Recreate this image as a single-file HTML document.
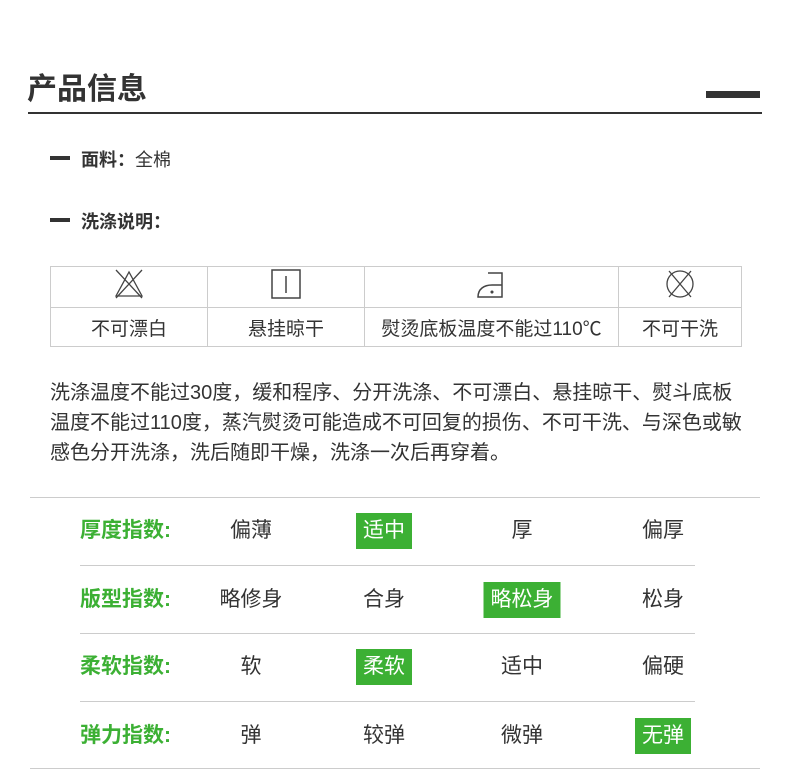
<!DOCTYPE html>
<html><head><meta charset="utf-8"><style>
*{margin:0;padding:0;box-sizing:border-box}
body{width:790px;height:769px;background:#fff;position:relative;font-family:"Liberation Sans","Noto Sans CJK SC",sans-serif;color:#333;overflow:hidden}
.a{position:absolute}
.title{left:27px;top:64px;font-size:30px;font-weight:bold;color:#333}
.dash{width:20px;height:4px;background:#333}
.bt{font-size:18px;font-weight:bold}
table.w{position:absolute;left:50px;top:266px;border-collapse:collapse}
table.w td{border:1px solid #ccc;text-align:center;font-size:19px;color:#333}
.p{left:50px;top:378px;width:740px;font-size:20px;line-height:30px;color:#333;white-space:nowrap}
.lab{font-size:21px;font-weight:bold;color:#3cb034;height:36px;line-height:36px}
.v{font-size:21px;color:#333;transform:translateX(-50%);white-space:nowrap;height:36px;line-height:36px}
.g{background:#3cb034;color:#fff;padding:0 7px}
.hl{height:1px;background:#ccc}
</style></head><body>
<div class="a title">产品信息</div>
<div class="a" style="left:706px;top:91px;width:54px;height:7px;background:#333"></div>
<div class="a" style="left:28px;top:112px;width:734px;height:2px;background:#333"></div>
<div class="a dash" style="left:50px;top:156px"></div>
<div class="a" style="left:81px;top:146px;font-size:18px"><b>面料：</b>全棉</div>
<div class="a dash" style="left:50px;top:218px"></div>
<div class="a bt" style="left:81px;top:208px">洗涤说明：</div>
<table class="w">
<tr style="height:41px">
<td style="width:157px"><svg width="34" height="34" viewBox="0 0 34 34" fill="none" stroke="#444" stroke-width="1.3"><path d="M17 5 L4 29 H30 Z"/><path d="M4 3 L30 31 M30 3 L4 31"/></svg></td>
<td style="width:157px"><svg width="32" height="32" viewBox="0 0 32 32" fill="none" stroke="#444" stroke-width="1.5"><rect x="2" y="2" width="28" height="28"/><path d="M16 8 V25"/></svg></td>
<td style="width:254px"><svg width="36" height="34" viewBox="0 0 36 34" fill="none" stroke="#444" stroke-width="1.5"><path d="M14 6 H28 V30 H4 C4 22 10 18 18 18 H28"/><circle cx="18" cy="25" r="0.8" fill="#444"/></svg></td>
<td style="width:123px"><svg width="34" height="34" viewBox="0 0 34 34" fill="none" stroke="#444" stroke-width="1.3"><circle cx="17" cy="17" r="13"/><path d="M6 4 L28 30 M28 4 L6 30"/></svg></td>
</tr>
<tr style="height:39px"><td>不可漂白</td><td>悬挂晾干</td><td>熨烫底板温度不能过110℃</td><td>不可干洗</td></tr>
</table>
<div class="a p">洗涤温度不能过30度，缓和程序、分开洗涤、不可漂白、悬挂晾干、熨斗底板<br>温度不能过110度，蒸汽熨烫可能造成不可回复的损伤、不可干洗、与深色或敏<br>感色分开洗涤，洗后随即干燥，洗涤一次后再穿着。</div>
<div class="a hl" style="left:30px;top:497px;width:730px"></div>
<div class="a hl" style="left:80px;top:565px;width:615px"></div>
<div class="a hl" style="left:80px;top:633px;width:615px"></div>
<div class="a hl" style="left:80px;top:701px;width:615px"></div>
<div class="a hl" style="left:30px;top:768px;width:730px"></div>

<div class="a lab" style="left:80px;top:513px">厚度指数:</div>
<div class="a v" style="left:251px;top:513px">偏薄</div>
<div class="a v g" style="left:384px;top:513px">适中</div>
<div class="a v" style="left:522px;top:513px">厚</div>
<div class="a v" style="left:663px;top:513px">偏厚</div>

<div class="a lab" style="left:80px;top:582px">版型指数:</div>
<div class="a v" style="left:251px;top:582px">略修身</div>
<div class="a v" style="left:384px;top:582px">合身</div>
<div class="a v g" style="left:522px;top:582px">略松身</div>
<div class="a v" style="left:663px;top:582px">松身</div>

<div class="a lab" style="left:80px;top:649px">柔软指数:</div>
<div class="a v" style="left:251px;top:649px">软</div>
<div class="a v g" style="left:384px;top:649px">柔软</div>
<div class="a v" style="left:522px;top:649px">适中</div>
<div class="a v" style="left:663px;top:649px">偏硬</div>

<div class="a lab" style="left:80px;top:718px">弹力指数:</div>
<div class="a v" style="left:251px;top:718px">弹</div>
<div class="a v" style="left:384px;top:718px">较弹</div>
<div class="a v" style="left:522px;top:718px">微弹</div>
<div class="a v g" style="left:663px;top:718px">无弹</div>
</body></html>
